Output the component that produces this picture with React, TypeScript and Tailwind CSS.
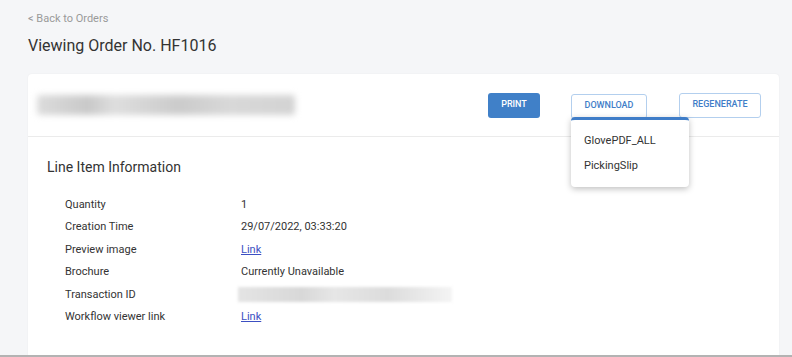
import { useState } from 'react';

const rows: { label: string; value: string; kind?: 'link' | 'blur' }[] = [
  { label: 'Quantity', value: '1' },
  { label: 'Creation Time', value: '29/07/2022, 03:33:20' },
  { label: 'Preview image', value: 'Link', kind: 'link' },
  { label: 'Brochure', value: 'Currently Unavailable' },
  { label: 'Transaction ID', value: '', kind: 'blur' },
  { label: 'Workflow viewer link', value: 'Link', kind: 'link' },
];

export default function App() {
  const [open] = useState(true);

  return (
    <div className="h-[357px] overflow-hidden border-b-2 border-[#b3b3b3] bg-[#f5f6f8] pl-[28px] pr-[13px] font-['Roboto',sans-serif]">
      {/* Back link */}
      <div className="pt-[12px] text-[11px] leading-[14px] text-[#9a9a9a]">&lt; Back to Orders</div>

      {/* Title */}
      <h1 className="mt-[10px] text-[16px] leading-[20px] text-[#333]">Viewing Order No. HF1016</h1>

      {/* Card */}
      <div className="mt-[18px] h-[300px] rounded-[4px] bg-white shadow-[0_0_2px_rgba(0,0,0,0.06)]">
        {/* Header */}
        <div className="flex h-[63px] items-center border-b border-[#ebebeb] pl-[9px] pr-[18px]">
          <div className="flex-1">
            <div className="h-[20px] w-[258px] rounded-[3px] bg-[linear-gradient(90deg,#dcdcdc,#c9c9c9_20%,#dedede_30%,#cbcbcb_55%,#d8d8d8_75%,#d3d3d3)] blur-[3px]" />
          </div>
          <div className="flex items-center">
            <button className="h-[25px] w-[52px] rounded-[3px] bg-[#4080c8] text-[9px] font-medium text-white">PRINT</button>
            <div className="relative ml-[31px]">
              <button className="h-[25px] w-[76px] rounded-[3px] border border-[#b3cfee] bg-white text-[9px] font-medium text-[#3f7dc8]">
                DOWNLOAD
              </button>
              {open && (
                <div className="absolute left-0 top-[26px] z-10 w-[118px] overflow-hidden rounded-[4px] border-t-[3px] border-[#3f7dc8] bg-white pb-[9px] pt-[8px] shadow-[0_2px_6px_rgba(0,0,0,0.25)]">
                  <div className="flex h-[25px] items-center pl-[13px] text-[11px] text-[#333]">GlovePDF_ALL</div>
                  <div className="flex h-[25px] items-center pl-[13px] text-[11px] text-[#333]">PickingSlip</div>
                </div>
              )}
            </div>
            <button className="ml-[32px] h-[25px] w-[82px] rounded-[3px] border border-[#b3cfee] bg-white text-[9px] font-medium text-[#3f7dc8]">
              REGENERATE
            </button>
          </div>
        </div>

        {/* Body */}
        <div className="pl-[19px] pt-[21px]">
          <h2 className="text-[14px] leading-[18px] text-[#333]">Line Item Information</h2>
          <div className="mt-[18px] pl-[18px]">
            {rows.map((r) => (
              <div key={r.label} className="flex h-[22.4px] items-center text-[11px] text-[#333]">
                <div className="w-[176px]">{r.label}</div>
                {r.kind === 'link' ? (
                  <a href="#" className="text-[#3c4fc2] underline">{r.value}</a>
                ) : r.kind === 'blur' ? (
                  <div className="-ml-[3px] h-[15px] w-[214px] bg-[linear-gradient(90deg,#e4e4e4,#d8d8d8_30%,#e6e6e6_45%,#dcdcdc_70%,#f4f4f4)] blur-[1.5px]" />
                ) : (
                  <span>{r.value}</span>
                )}
              </div>
            ))}
          </div>
        </div>
      </div>
    </div>
  );
}
